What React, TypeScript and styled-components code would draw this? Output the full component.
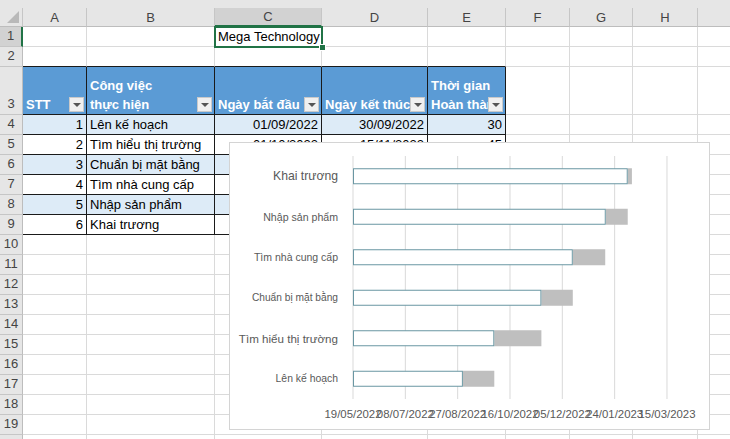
import React from 'react';
import styled, { createGlobalStyle } from 'styled-components';

const GlobalStyle = createGlobalStyle`
  html, body {
    margin: 0;
    padding: 0;
    background: #ffffff;
    overflow: hidden;
  }
  body {
    font-family: "Liberation Sans", Arial, sans-serif;
  }
`;

// sheet geometry
const COLS = ['A', 'B', 'C', 'D', 'E', 'F', 'G', 'H', 'I'];
const COL_TEMPLATE = '23px 64px 128px 107px 106px 78px 64px 63px 65px 72px';
const ROW_COUNT = 20;

interface Task {
  stt: number;
  name: string;
  start: string;
  end: string;
  days: number;
  offset: number; // days after 19/05/2022
  labelSize: number;
}

const tasks: Task[] = [
  { stt: 1, name: 'Lên kế hoạch', start: '01/09/2022', end: '30/09/2022', days: 30, offset: 105, labelSize: 10.4 },
  { stt: 2, name: 'Tìm hiểu thị trường', start: '01/10/2022', end: '15/11/2022', days: 45, offset: 135, labelSize: 11.6 },
  { stt: 3, name: 'Chuẩn bị mặt bằng', start: '15/11/2022', end: '15/12/2022', days: 30, offset: 180, labelSize: 10.2 },
  { stt: 4, name: 'Tìm nhà cung cấp', start: '15/12/2022', end: '15/01/2023', days: 31, offset: 210, labelSize: 10.5 },
  { stt: 5, name: 'Nhập sản phẩm', start: '15/01/2023', end: '05/02/2023', days: 21, offset: 241.5, labelSize: 10.6 },
  { stt: 6, name: 'Khai trương', start: '06/02/2023', end: '10/02/2023', days: 4, offset: 262.5, labelSize: 12.2 },
];

const axisLabels = ['19/05/2022', '08/07/2022', '27/08/2022', '16/10/2022', '05/12/2022', '24/01/2023', '15/03/2023'];

const Page = styled.div`
  position: relative;
  width: 730px;
  height: 439px;
  overflow: hidden;
  background: #ffffff;
`;

const TopStrip = styled.div`
  height: 8px;
  background: #e6e6e6;
`;

const Sheet = styled.div`
  display: grid;
  grid-template-columns: ${COL_TEMPLATE};
  grid-template-rows: 19px 20px 20px 48px repeat(${ROW_COUNT - 3}, 20px);
`;

const Corner = styled.div`
  box-sizing: border-box;
  position: relative;
  background: #e6e6e6;
  border-right: 1px solid #c6c6c6;
  border-bottom: 1px solid #bdbdbd;

  &::after {
    content: '';
    position: absolute;
    right: 3px;
    bottom: 3px;
    border-left: 12px solid transparent;
    border-bottom: 12px solid #b9b9b9;
  }
`;

const ColHead = styled.div<{ $active?: boolean }>`
  box-sizing: border-box;
  display: flex;
  align-items: center;
  justify-content: center;
  background: ${p => (p.$active ? '#d2d2d2' : '#e6e6e6')};
  border-right: 1px solid #c6c6c6;
  border-bottom: ${p => (p.$active ? '2px solid #217346' : '1px solid #bdbdbd')};
  color: #444444;
  font-size: 13px;
`;

const RowHead = styled.div<{ $active?: boolean }>`
  box-sizing: border-box;
  display: flex;
  align-items: flex-end;
  justify-content: center;
  padding-bottom: 1px;
  background: ${p => (p.$active ? '#d2d2d2' : '#e6e6e6')};
  border-right: ${p => (p.$active ? '2px solid #217346' : '1px solid #bdbdbd')};
  border-bottom: 1px solid #c6c6c6;
  color: #444444;
  font-size: 13px;
  line-height: 18px;
`;

const Cell = styled.div<{
  $fill?: string;
  $dark?: boolean;
  $darkBottom?: boolean;
  $right?: boolean;
  $head?: boolean;
  $front?: boolean;
}>`
  box-sizing: border-box;
  position: relative;
  z-index: ${p => (p.$front ? 3 : 'auto')};
  display: flex;
  align-items: flex-end;
  justify-content: ${p => (p.$right ? 'flex-end' : 'flex-start')};
  padding: 0 3px 0 3px;
  background: ${p => p.$fill ?? '#ffffff'};
  border-right: 1px solid ${p => (p.$dark ? '#1a1a1a' : '#dadada')};
  border-bottom: 1px solid ${p => (p.$dark || p.$darkBottom ? '#1a1a1a' : '#dadada')};
  color: ${p => (p.$head ? '#ffffff' : '#000000')};
  font-weight: ${p => (p.$head ? 700 : 400)};
  font-size: 13px;
  line-height: 19px;
  white-space: pre;
  overflow: ${p => (p.$head ? 'hidden' : 'visible')};
`;

const Selection = styled.span`
  position: absolute;
  left: -1px;
  top: -1px;
  right: -2px;
  bottom: -2px;
  border: 2px solid #217346;
  pointer-events: none;
`;

const FillHandle = styled.span`
  position: absolute;
  right: -5px;
  bottom: -5px;
  width: 5px;
  height: 5px;
  background: #217346;
  border: 1px solid #ffffff;
`;

const FilterButton = styled.span`
  position: absolute;
  right: 2px;
  bottom: 2px;
  box-sizing: border-box;
  width: 15px;
  height: 15px;
  background: #f0f0f0;
  border: 1px solid #c9c9c9;
  display: flex;
  align-items: center;
  justify-content: center;

  &::after {
    content: '';
    border-left: 4px solid transparent;
    border-right: 4px solid transparent;
    border-top: 4px solid #555555;
  }
`;

const ChartBox = styled.div`
  position: absolute;
  left: 229px;
  top: 142px;
  width: 481px;
  height: 288px;
  box-sizing: border-box;
  background: #ffffff;
  border: 1px solid #d4d4d4;
  z-index: 5;
`;

const headers = ['STT', 'Công việc\nthực hiện', 'Ngày bắt đầu', 'Ngày kết thúc', 'Thời gian\nHoàn thành'];

const renderRow = (row: number) => {
  const cells: React.ReactNode[] = [];
  cells.push(
    <RowHead key={`h${row}`} $active={row === 1}>
      {row}
    </RowHead>
  );
  COLS.forEach((col, ci) => {
    const key = `${col}${row}`;
    const inTable = ci < 5;
    if (row === 1 && col === 'C') {
      cells.push(
        <Cell key={key} $front>
          Mega Technology
          <Selection />
          <FillHandle />
        </Cell>
      );
      return;
    }
    if (row === 2 && inTable) {
      cells.push(<Cell key={key} $darkBottom />);
      return;
    }
    if (row === 3 && inTable) {
      cells.push(
        <Cell key={key} $dark $head $fill="#5b9bd5">
          {headers[ci]}
          <FilterButton />
        </Cell>
      );
      return;
    }
    if (row >= 4 && row <= 9 && inTable) {
      const t = tasks[row - 4];
      const fill = row % 2 === 0 ? '#ddebf7' : '#ffffff';
      const values = [String(t.stt), t.name, t.start, t.end, String(t.days)];
      cells.push(
        <Cell key={key} $dark $fill={fill} $right={ci !== 1}>
          {values[ci]}
        </Cell>
      );
      return;
    }
    cells.push(<Cell key={key} />);
  });
  return cells;
};

// chart geometry, in chart coords
const X0 = 123;
const STEP = 52.33;
const PX_PER_DAY = STEP / 50;
const PLOT_TOP = 13;
const PLOT_BOTTOM = 256;
const BAND = (PLOT_BOTTOM - PLOT_TOP) / tasks.length;
const BAR_H = 16;

const GanttChart: React.FC = () => {
  const ordered = [...tasks].reverse();
  return (
    <ChartBox>
      <svg width="479" height="286" viewBox="0 0 479 286" fontFamily='"Liberation Sans", Arial, sans-serif'>
        {axisLabels.map((_, i) => (
          <line
            key={`g${i}`}
            x1={X0 + i * STEP}
            x2={X0 + i * STEP}
            y1={PLOT_TOP}
            y2={PLOT_BOTTOM}
            stroke="#d9d9d9"
            strokeWidth={1}
          />
        ))}
        {ordered.map((t, i) => {
          const cy = PLOT_TOP + BAND * i + BAND / 2;
          const startX = X0 + t.offset * PX_PER_DAY;
          const endX = X0 + (t.offset + t.days) * PX_PER_DAY;
          return (
            <g key={t.stt}>
              <rect x={startX} y={cy - BAR_H / 2} width={endX - startX} height={BAR_H} fill="#bfbfbf" />
              <rect
                x={X0 + 0.5}
                y={cy - BAR_H / 2 + 0.5}
                width={startX - X0 - 1}
                height={BAR_H - 1}
                fill="#ffffff"
                stroke="#6a97a3"
                strokeWidth={1}
              />
              <text
                x={108}
                y={cy}
                textAnchor="end"
                dominantBaseline="central"
                fontSize={t.labelSize}
                fill="#595959"
              >
                {t.name}
              </text>
            </g>
          );
        })}
        {axisLabels.map((label, i) => (
          <text
            key={label}
            x={X0 + i * STEP}
            y={271}
            textAnchor="middle"
            dominantBaseline="central"
            fontSize={11.4}
            fill="#595959"
          >
            {label}
          </text>
        ))}
      </svg>
    </ChartBox>
  );
};

const App: React.FC = () => {
  const rows: React.ReactNode[] = [];
  for (let r = 1; r <= ROW_COUNT; r++) rows.push(...renderRow(r));

  return (
    <Page>
      <GlobalStyle />
      <TopStrip />
      <Sheet>
        <Corner />
        {COLS.map(c => (
          <ColHead key={c} $active={c === 'C'}>
            {c === 'I' ? '' : c}
          </ColHead>
        ))}
        {rows}
      </Sheet>
      <GanttChart />
    </Page>
  );
};

export default App;
